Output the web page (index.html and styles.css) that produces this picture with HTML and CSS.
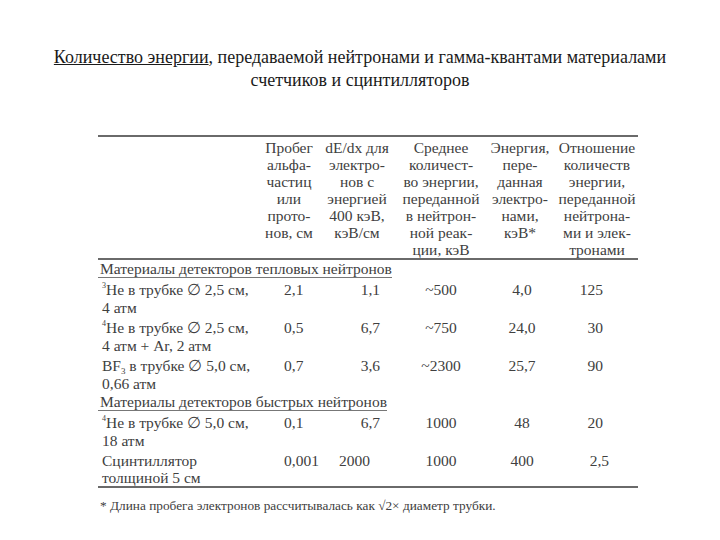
FILE: index.html
```html
<!DOCTYPE html>
<html lang="ru">
<head>
<meta charset="utf-8">
<link rel="stylesheet" href="styles.css">
</head>
<body>
<div class="slide">
  <h1 class="title"><span class="u">Количество энергии</span>, передаваемой нейтронами и гамма-квантами материалами<br>счетчиков и сцинтилляторов</h1>
  <div class="scan">
    <table class="tbl">
      <colgroup>
        <col class="c1"><col class="c2"><col class="c3"><col class="c4"><col class="c5"><col class="c6">
      </colgroup>
      <thead>
        <tr>
          <th></th>
          <th>Пробег<br>альфа-<br>частиц<br>или<br>прото-<br>нов, см</th>
          <th>dE/dx для<br>электро-<br>нов с<br>энергией<br>400 кэВ,<br>кэВ/см</th>
          <th>Среднее<br>количест-<br>во энергии,<br>переданной<br>в нейтрон-<br>ной реак-<br>ции, кэВ</th>
          <th>Энергия,<br>пере-<br>данная<br>электро-<br>нами,<br>кэВ*</th>
          <th>Отношение<br>количеств<br>энергии,<br>переданной<br>нейтрона-<br>ми и элек-<br>тронами</th>
        </tr>
      </thead>
      <tbody>
        <tr class="sec"><td colspan="3"><span class="secname">Материалы детекторов тепловых нейтронов</span></td><td colspan="3"></td></tr>
        <tr class="first">
          <td class="lab"><sup>3</sup>He в трубке ∅ 2,5 см,<br>4 атм</td>
          <td class="v2">2,1</td><td class="v3">1,1</td><td class="v4">~500</td><td class="v5">4,0</td><td class="v6">125</td>
        </tr>
        <tr>
          <td class="lab"><sup>4</sup>He в трубке ∅ 2,5 см,<br>4 атм + Ar, 2 атм</td>
          <td class="v2">0,5</td><td class="v3">6,7</td><td class="v4">~750</td><td class="v5">24,0</td><td class="v6">30</td>
        </tr>
        <tr>
          <td class="lab">BF<sub>3</sub> в трубке ∅ 5,0 см,<br>0,66 атм</td>
          <td class="v2">0,7</td><td class="v3">3,6</td><td class="v4">~2300</td><td class="v5">25,7</td><td class="v6">90</td>
        </tr>
        <tr class="sec"><td colspan="3"><span class="secname">Материалы детекторов быстрых нейтронов</span></td><td colspan="3"></td></tr>
        <tr class="first">
          <td class="lab"><sup>4</sup>He в трубке ∅ 5,0 см,<br>18 атм</td>
          <td class="v2">0,1</td><td class="v3">6,7</td><td class="v4">1000</td><td class="v5">48</td><td class="v6">20</td>
        </tr>
        <tr class="last">
          <td class="lab">Сцинтиллятор<br>толщиной 5 см</td>
          <td class="v2">0,001</td><td class="v3 shift">2000</td><td class="v4">1000</td><td class="v5">400</td><td class="v6 shift6">2,5</td>
        </tr>
      </tbody>
    </table>
    <p class="note">* Длина пробега электронов рассчитывалась как √2× диаметр трубки.</p>
  </div>
</div>
</body>
</html>
```

FILE: styles.css
```css
html, body {
  margin: 0;
  padding: 0;
  background: #ffffff;
}

.slide {
  width: 720px;
  height: 540px;
  overflow: hidden;
  font-family: "Liberation Serif", "Times New Roman", serif;
}

.title {
  margin: 0;
  padding-top: 46px;
  font-size: 18px;
  font-weight: normal;
  line-height: 23px;
  text-align: center;
  color: #1a1a1a;
}

.u {
  text-decoration: underline;
}

.scan {
  margin: 43px 0 0 98px;
  width: 540px;
  color: #404040;
}

.tbl {
  width: 540px;
  table-layout: fixed;
  border-collapse: collapse;
  font-size: 15.5px;
  border-top: 2px solid #6a6a6a;
  border-bottom: 2px solid #6a6a6a;
}

.c1 { width: 164px; }
.c2 { width: 54px; }
.c3 { width: 82px; }
.c4 { width: 86px; }
.c5 { width: 72px; }
.c6 { width: 82px; }

.tbl th {
  font-weight: normal;
  text-align: center;
  vertical-align: top;
  line-height: 17px;
  padding: 2px 0 0;
  white-space: nowrap;
  border-bottom: 2px solid #6a6a6a;
}

.tbl td {
  line-height: 18px;
  padding: 2px 0 0;
  vertical-align: top;
  white-space: nowrap;
}

.tbl tr.sec td {
  padding: 0;
}

.secname {
  display: inline-block;
  padding-left: 2px;
  border-bottom: 1px solid #777;
  line-height: 17px;
}

.tbl tr.first td {
  padding-top: 3px;
}

.tbl tr.last td {
  line-height: 17px;
}

.lab {
  padding-left: 4px !important;
}

.lab sup {
  font-size: 8px;
  vertical-align: 7px;
  line-height: 0;
}

.lab sub {
  font-size: 9px;
  vertical-align: -3px;
  line-height: 0;
}

.v2 { padding-left: 22px !important; }
.v3 { text-align: right; padding-right: 18px !important; }
.v3.shift { padding-right: 28px !important; }
.v4 { text-align: center; }
.v5 { text-align: center; padding-left: 4px !important; }
.v6 { text-align: right; padding-right: 35px !important; }
.v6.shift6 { padding-right: 29px !important; }

.note {
  margin: 10px 0 0 2px;
  font-size: 13.3px;
  line-height: 16px;
  color: #404040;
}
```
